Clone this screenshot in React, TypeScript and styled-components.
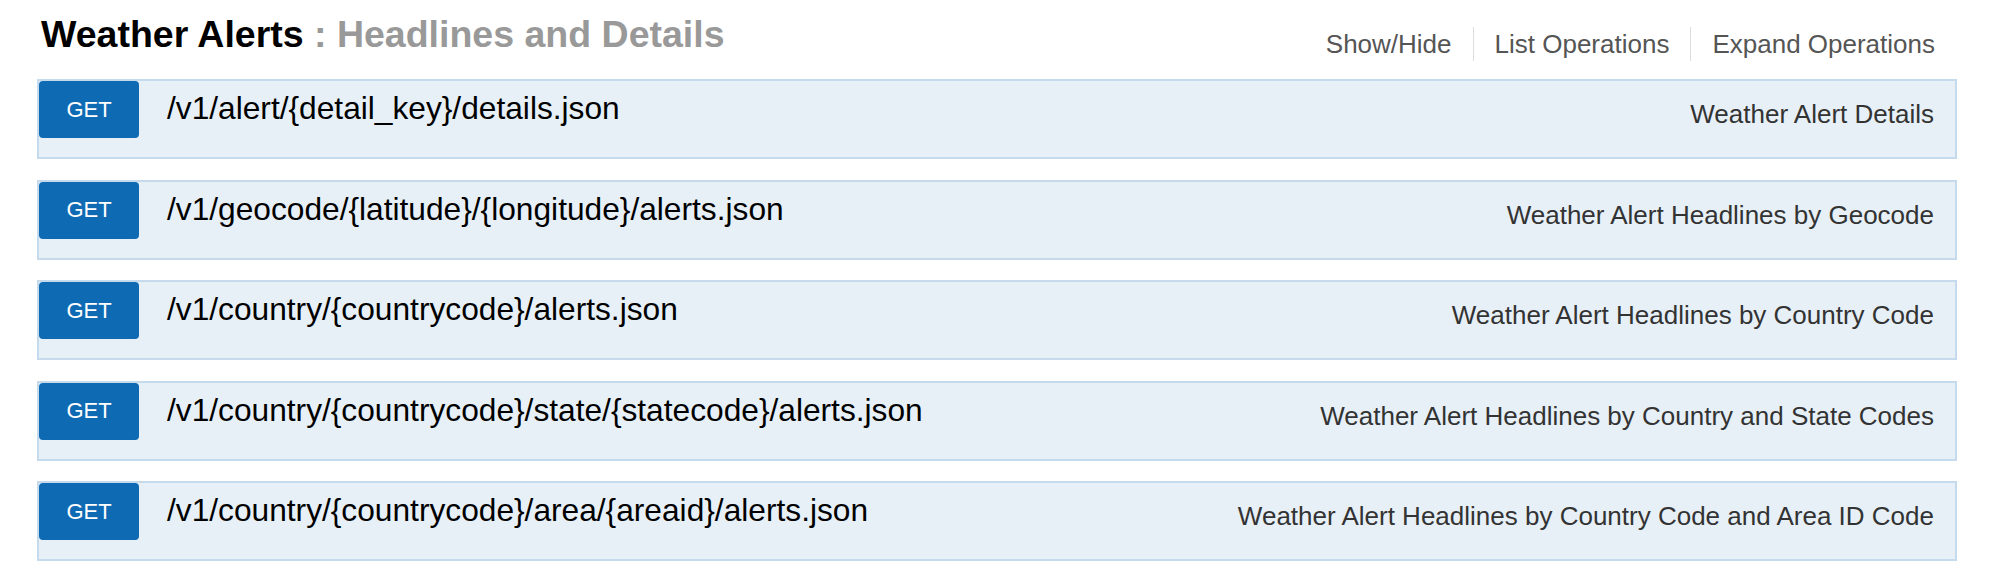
import React from "react";
import styled, { createGlobalStyle } from "styled-components";

const GlobalStyle = createGlobalStyle`
  html, body {
    margin: 0;
    padding: 0;
    background: #fff;
  }
  body {
    font-family: "Liberation Sans", Arial, Helvetica, sans-serif;
  }
`;

const Page = styled.div`
  width: 1920px;
  padding-left: 37px;
`;

const Header = styled.div`
  display: flex;
  justify-content: space-between;
  align-items: flex-start;
  height: 79px;
`;

const Title = styled.h2`
  margin: 0;
  padding: 16px 0 0 4px;
  font-size: 37.5px;
  line-height: 37.5px;
  font-weight: bold;
  color: #000;
  span {
    color: #999;
  }
`;

const Options = styled.ul`
  display: flex;
  list-style: none;
  margin: 0;
  padding: 27px 22px 0 0;
`;

const Option = styled.li<{ $last?: boolean }>`
  font-size: 26px;
  line-height: 34px;
  color: #555;
  padding: ${(p) => (p.$last ? "0 0 0 21px" : "0 21px")};
  border-right: ${(p) => (p.$last ? "none" : "1px solid #ddd")};
  &:first-child {
    padding-left: 0;
  }
`;

const List = styled.div`
  display: flex;
  flex-direction: column;
  gap: 20.5px;
`;

const Row = styled.div`
  display: flex;
  align-items: flex-start;
  height: 76px;
  background: #e7f0f7;
  border: 2px solid #c5daed;
`;

const Method = styled.span`
  display: flex;
  align-items: center;
  justify-content: center;
  width: 100px;
  height: 57px;
  flex-shrink: 0;
  background: #0f6ab4;
  border-radius: 4px;
  color: #fff;
  font-size: 22px;
`;

const Path = styled.span`
  margin-left: 28px;
  font-size: 31.7px;
  line-height: 54px;
  color: #000;
  white-space: nowrap;
`;

const Summary = styled.span`
  margin-left: auto;
  padding: 18px 21px 0 0;
  font-size: 26px;
  line-height: 30px;
  color: #333;
  white-space: nowrap;
`;

const endpoints = [
  { path: "/v1/alert/{detail_key}/details.json", summary: "Weather Alert Details" },
  { path: "/v1/geocode/{latitude}/{longitude}/alerts.json", summary: "Weather Alert Headlines by Geocode" },
  { path: "/v1/country/{countrycode}/alerts.json", summary: "Weather Alert Headlines by Country Code" },
  {
    path: "/v1/country/{countrycode}/state/{statecode}/alerts.json",
    summary: "Weather Alert Headlines by Country and State Codes",
  },
  {
    path: "/v1/country/{countrycode}/area/{areaid}/alerts.json",
    summary: "Weather Alert Headlines by Country Code and Area ID Code",
  },
];

const App = () => {
  return (
    <Page>
      <GlobalStyle />
      <Header>
        <Title>
          Weather Alerts <span>: Headlines and Details</span>
        </Title>
        <Options>
          <Option>Show/Hide</Option>
          <Option>List Operations</Option>
          <Option $last>Expand Operations</Option>
        </Options>
      </Header>
      <List>
        {endpoints.map((e) => (
          <Row key={e.path}>
            <Method>GET</Method>
            <Path>{e.path}</Path>
            <Summary>{e.summary}</Summary>
          </Row>
        ))}
      </List>
    </Page>
  );
};

export default App;
